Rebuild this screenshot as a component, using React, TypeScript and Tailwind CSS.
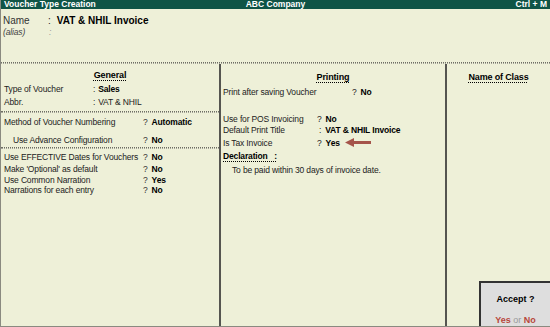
import React from "react";

const font = { fontFamily: "'Liberation Sans', Arial, sans-serif" };

function Row({
  label,
  value,
  sep = "?",
  h = "h-[12px]",
  labelW = "w-[139px]",
  indent = false,
}: {
  label: string;
  value: string;
  sep?: string;
  h?: string;
  labelW?: string;
  indent?: boolean;
}) {
  return (
    <div className={`flex ${h} items-center whitespace-nowrap`}>
      <span className={`${labelW} shrink-0 ${indent ? "pl-[9px]" : ""}`}>{label}</span>
      <span className="text-[#333]">{sep}</span>
      <span className="ml-[4px] font-bold text-black">{value}</span>
    </div>
  );
}

function Rule() {
  return <div className="h-[2px] shrink-0 border-t border-b border-dotted border-t-[#6e6e64] border-b-[#a4a498]" />;
}

export default function App() {
  return (
    <div
      style={font}
      className="relative flex h-[327px] w-[550px] flex-col overflow-hidden border-l border-b border-[#8a8a80] bg-[#eef0d8] text-[8.5px] leading-[12px] tracking-[-0.15px] text-[#222]"
    >
      {/* title bar */}
      <div className="flex h-[9px] shrink-0 items-center justify-between bg-[#0f5446] px-[3px] text-[8.5px] font-bold leading-none tracking-normal text-white">
        <span className="w-[140px]">Voucher Type Creation</span>
        <span>ABC Company</span>
        <span className="w-[140px] text-right">Ctrl + M</span>
      </div>

      {/* name block */}
      <div className="h-[53px] shrink-0 px-[2px] pt-[5px]">
        <div className="flex h-[13px] items-center text-[10px] tracking-normal">
          <span className="w-[45px] text-[#333]">Name</span>
          <span className="mr-[6px]">:</span>
          <span className="font-bold text-black">VAT &amp; NHIL Invoice</span>
        </div>
        <div className="flex h-[10px] items-center italic text-[#444]">
          <span className="w-[46px]">(alias)</span>
          <span className="text-[#999]">:</span>
        </div>
      </div>

      <Rule />

      {/* columns */}
      <div className="flex min-h-0 flex-1">
        {/* General */}
        <div className="flex w-[220px] shrink-0 flex-col border-r-2 border-[#555550]">
          <div className="px-[3px] pt-[5px]">
            <div className="mb-[1px] h-[12px] text-center text-[9px] font-bold text-black underline decoration-dotted underline-offset-2">
              General
            </div>
            <div className="flex h-[13px] items-center whitespace-nowrap">
              <span className="w-[89px]">Type of Voucher</span>
              <span>:</span>
              <span className="ml-[3px] font-bold text-black">Sales</span>
            </div>
            <div className="flex h-[13px] items-center whitespace-nowrap">
              <span className="w-[89px]">Abbr.</span>
              <span>:</span>
              <span className="ml-[3px]">VAT &amp; NHIL</span>
            </div>
          </div>
          <div className="mt-[3px]">
            <Rule />
          </div>
          <div className="px-[3px] pt-[3px] pb-[1px]">
            <Row label="Method of Voucher Numbering" value="Automatic" />
            <div className="h-[6px]" />
            <Row label="Use Advance Configuration" value="No" indent />
          </div>
          <Rule />
          <div className="px-[3px] pt-[1px]">
            <Row label="Use EFFECTIVE Dates for Vouchers" value="No" h="h-[13px]" />
            <Row label="Make 'Optional' as default" value="No" />
            <Row label="Use Common Narration" value="Yes" h="h-[10px]" />
            <Row label="Narrations for each entry" value="No" h="h-[10px]" />
          </div>
        </div>

        {/* Printing */}
        <div className="flex w-[226px] shrink-0 flex-col border-r-2 border-[#555550] px-[2px] pt-[7px]">
          <div className="mb-[3px] h-[12px] text-center text-[9px] font-bold text-black underline decoration-dotted underline-offset-2">
            Printing
          </div>
          <div className="flex h-[12px] items-center whitespace-nowrap">
            <span className="w-[129px]">Print after saving Voucher</span>
            <span>?</span>
            <span className="ml-[4px] font-bold text-black">No</span>
          </div>
          <div className="h-[15px]" />
          <div className="flex h-[11px] items-center whitespace-nowrap">
            <span className="w-[94px]">Use for POS Invoicing</span>
            <span>?</span>
            <span className="ml-[4px] font-bold text-black">No</span>
          </div>
          <div className="flex h-[12px] items-center whitespace-nowrap">
            <span className="w-[96px]">Default Print Title</span>
            <span>:</span>
            <span className="ml-[4px] font-bold text-black">VAT &amp; NHIL Invoice</span>
          </div>
          <div className="flex h-[13px] items-center whitespace-nowrap">
            <span className="w-[94px]">Is Tax Invoice</span>
            <span>?</span>
            <span className="ml-[4px] font-bold text-black">Yes</span>
            <svg width="26" height="9" viewBox="0 0 26 9" className="ml-[5px]">
              <polygon points="0,4.5 9,0 9,3 26,3 26,6 9,6 9,9" fill="#a5544a" />
            </svg>
          </div>
          <div className="flex h-[13px] items-center whitespace-nowrap font-bold text-black">
            <span className="underline decoration-dotted underline-offset-2">Declaration&nbsp;&nbsp;&nbsp;:</span>
          </div>
          <div className="mt-[2px] flex h-[12px] items-center whitespace-nowrap pl-[9px]">
            To be paid within 30 days of invoice date.
          </div>
        </div>

        {/* Name of Class */}
        <div className="flex-1 pt-[7px] text-center">
          <span className="text-[9px] font-bold text-black underline decoration-dotted underline-offset-2">
            Name of Class
          </span>
        </div>
      </div>

      {/* accept box */}
      <div className="absolute right-0 bottom-0 flex h-[45px] w-[71px] flex-col items-center border-t-2 border-l-2 border-[#333] bg-[#dedede] bg-[radial-gradient(#b8c4cc_0.6px,transparent_0.6px)] bg-[length:6px_6px] leading-[10px] tracking-normal">
        <div className="mt-[11px] text-[9px] font-bold text-black">Accept ?</div>
        <div className="mt-[11px] text-[9px] font-bold">
          <span className="text-[#b8473b]">Yes</span>
          <span className="font-normal text-[#9a9a9a]"> or </span>
          <span className="text-[#b8473b]">No</span>
        </div>
      </div>
    </div>
  );
}
